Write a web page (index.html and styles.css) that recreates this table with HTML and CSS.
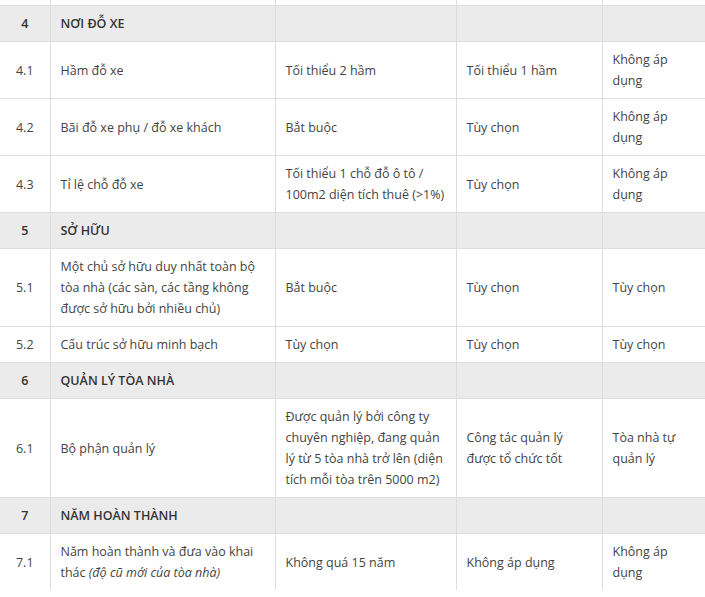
FILE: index.html
```html
<!DOCTYPE html>
<html lang="vi">
<head>
<meta charset="utf-8">
<title>Bảng tiêu chí</title>
<link rel="stylesheet" href="styles.css">
</head>
<body>
<table class="crit">
  <colgroup>
    <col class="c-num">
    <col class="c-name">
    <col class="c-a">
    <col class="c-b">
    <col class="c-c">
  </colgroup>
  <tbody>
    <tr class="stub"><td></td><td></td><td></td><td></td><td></td></tr>
    <tr class="section"><td class="num">4</td><td>NƠI ĐỖ XE</td><td></td><td></td><td></td></tr>
    <tr><td class="num">4.1</td><td>Hầm đỗ xe</td><td>Tối thiểu 2 hầm</td><td>Tối thiểu 1 hầm</td><td>Không áp dụng</td></tr>
    <tr><td class="num">4.2</td><td>Bãi đỗ xe phụ / đỗ xe khách</td><td>Bắt buộc</td><td>Tùy chọn</td><td>Không áp dụng</td></tr>
    <tr><td class="num">4.3</td><td>Tỉ lệ chỗ đỗ xe</td><td>Tối thiểu 1 chỗ đỗ ô tô / 100m2 diện tích thuê (&gt;1%)</td><td>Tùy chọn</td><td>Không áp dụng</td></tr>
    <tr class="section"><td class="num">5</td><td>SỞ HỮU</td><td></td><td></td><td></td></tr>
    <tr><td class="num">5.1</td><td>Một chủ sở hữu duy nhất toàn bộ tòa nhà (các sàn, các tầng không được sở hữu bởi nhiều chủ)</td><td>Bắt buộc</td><td>Tùy chọn</td><td>Tùy chọn</td></tr>
    <tr><td class="num">5.2</td><td>Cấu trúc sở hữu minh bạch</td><td>Tùy chọn</td><td>Tùy chọn</td><td>Tùy chọn</td></tr>
    <tr class="section"><td class="num">6</td><td>QUẢN LÝ TÒA NHÀ</td><td></td><td></td><td></td></tr>
    <tr><td class="num">6.1</td><td>Bộ phận quản lý</td><td>Được quản lý bởi công ty chuyên nghiệp, đang quản lý từ 5 tòa nhà trở lên (diện tích mỗi tòa trên 5000 m2)</td><td>Công tác quản lý được tổ chức tốt</td><td>Tòa nhà tự quản lý</td></tr>
    <tr class="section"><td class="num">7</td><td>NĂM HOÀN THÀNH</td><td></td><td></td><td></td></tr>
    <tr class="last"><td class="num">7.1</td><td>Năm hoàn thành và đưa vào khai thác <em>(độ cũ mới của tòa nhà)</em></td><td>Không quá 15 năm</td><td>Không áp dụng</td><td>Không áp dụng</td></tr>
  </tbody>
</table>
</body>
</html>
```

FILE: styles.css
```css
html, body {
  margin: 0;
  padding: 0;
  background: #ffffff;
  overflow: hidden;
}

body {
  font-family: "Open Sans", "Liberation Sans", sans-serif;
  font-size: 12.5px;
  line-height: 21px;
  color: #444444;
}

.crit {
  border-collapse: collapse;
  table-layout: fixed;
  width: 707px;
}

.c-num { width: 50px; }
.c-name { width: 225px; }
.c-a { width: 181px; }
.c-b { width: 146px; }
.c-c { width: 105px; }

.crit td {
  border: 1px solid #dddddd;
  padding: 7px 10px;
  vertical-align: middle;
  text-align: left;
}

.crit td:first-child { border-left: 0; }
.crit td:last-child { border-right: 0; }

.crit .num {
  text-align: center;
  padding-left: 4px;
  padding-right: 4px;
}

.crit .stub td {
  border-top: 0;
  padding: 0;
  height: 5px;
  line-height: 0;
}

.crit .section td {
  background: #ebebeb;
  color: #333333;
  font-weight: 600;
}

.crit .last td { border-bottom: 0; }

.crit em { font-style: italic; }
```
